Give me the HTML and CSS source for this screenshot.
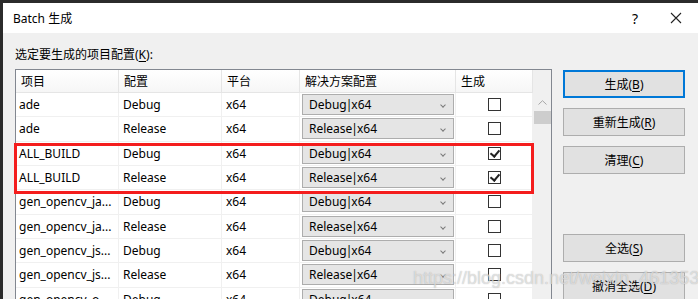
FILE: index.html
```html
<!DOCTYPE html>
<html lang="zh-CN">
<head>
    <meta charset="UTF-8">
    <title>Batch 生成</title>
    <link rel="stylesheet" href="styles.css">
</head>
<body>
    <div class="window">
        <div class="titlebar">
            <span class="title">Batch 生成</span>
            <span class="help">?</span>
            <svg class="close" width="12" height="12" viewBox="0 0 12 12">
                <path d="M1 1 L11 11 M11 1 L1 11" stroke="#222" stroke-width="1.1" fill="none"/>
            </svg>
        </div>

        <div class="content">
            <div class="caption">选定要生成的项目配置(<u>K</u>):</div>

            <div class="main">
                <div class="list">
                    <div class="grid">
                        <div class="th">项目</div>
                        <div class="th">配置</div>
                        <div class="th">平台</div>
                        <div class="th">解决方案配置</div>
                        <div class="th">生成</div>

                        <div class="td">ade</div>
                        <div class="td">Debug</div>
                        <div class="td">x64</div>
                        <div class="td"><div class="combo">Debug<b>|</b>x64<i></i></div></div>
                        <div class="td check-cell"><span class="check"></span></div>

                        <div class="td">ade</div>
                        <div class="td">Release</div>
                        <div class="td">x64</div>
                        <div class="td"><div class="combo">Release<b>|</b>x64<i></i></div></div>
                        <div class="td check-cell"><span class="check"></span></div>

                        <div class="td">ALL_BUILD</div>
                        <div class="td">Debug</div>
                        <div class="td">x64</div>
                        <div class="td"><div class="combo">Debug<b>|</b>x64<i></i></div></div>
                        <div class="td check-cell"><span class="check checked"></span></div>

                        <div class="td">ALL_BUILD</div>
                        <div class="td">Release</div>
                        <div class="td">x64</div>
                        <div class="td"><div class="combo">Release<b>|</b>x64<i></i></div></div>
                        <div class="td check-cell"><span class="check checked"></span></div>

                        <div class="td">gen_opencv_ja...</div>
                        <div class="td">Debug</div>
                        <div class="td">x64</div>
                        <div class="td"><div class="combo">Debug<b>|</b>x64<i></i></div></div>
                        <div class="td check-cell"><span class="check"></span></div>

                        <div class="td">gen_opencv_ja...</div>
                        <div class="td">Release</div>
                        <div class="td">x64</div>
                        <div class="td"><div class="combo">Release<b>|</b>x64<i></i></div></div>
                        <div class="td check-cell"><span class="check"></span></div>

                        <div class="td">gen_opencv_js...</div>
                        <div class="td">Debug</div>
                        <div class="td">x64</div>
                        <div class="td"><div class="combo">Debug<b>|</b>x64<i></i></div></div>
                        <div class="td check-cell"><span class="check"></span></div>

                        <div class="td">gen_opencv_js...</div>
                        <div class="td">Release</div>
                        <div class="td">x64</div>
                        <div class="td"><div class="combo">Release<b>|</b>x64<i></i></div></div>
                        <div class="td check-cell"><span class="check"></span></div>

                        <div class="td">gen_opencv_o...</div>
                        <div class="td">Debug</div>
                        <div class="td">x64</div>
                        <div class="td"><div class="combo">Debug<b>|</b>x64<i></i></div></div>
                        <div class="td check-cell"><span class="check"></span></div>
                    </div>

                    <div class="scrollbar">
                        <svg class="arrow-up" width="9" height="5" viewBox="0 0 9 5">
                            <path d="M0.5 4.5 L4.5 0.7 L8.5 4.5" stroke="#a6a6a6" stroke-width="1" fill="none"/>
                        </svg>
                        <div class="thumb"></div>
                    </div>

                    <div class="highlight"></div>
                </div>

                <div class="buttons">
                    <button class="btn default">生成(<u>B</u>)</button>
                    <button class="btn">重新生成(<u>R</u>)</button>
                    <button class="btn">清理(<u>C</u>)</button>
                    <button class="btn spaced">全选(<u>S</u>)</button>
                    <button class="btn">撤消全选(<u>D</u>)</button>
                </div>
            </div>
        </div>

        <div class="watermark">https://blog.csdn.net/weixin_46135347</div>
    </div>
</body>
</html>
```

FILE: styles.css
```css
* {
    box-sizing: border-box;
    margin: 0;
    padding: 0;
}

body {
    background: #2b2b2b;
    font-family: "Noto Sans", "Noto Sans CJK SC", sans-serif;
    font-size: 12px;
    color: #000;
    overflow: hidden;
    height: 299px;
}

u {
    text-decoration: underline;
    text-underline-offset: 2px;
}

.window {
    position: relative;
    margin: 3px 0 0 3px;
    height: 296px;
    background: #f0f0f0;
    overflow: hidden;
}

/* title bar */
.titlebar {
    display: flex;
    align-items: center;
    height: 30px;
    padding: 0 16px 0 10px;
    background: #fff;
}

.title {
    flex: 1;
    line-height: 16px;
    padding-top: 1px;
}

.help {
    font-size: 14px;
    margin-right: 32px;
    padding-top: 1px;
}

.close {
    display: block;
}

/* body */
.content {
    padding: 14px 0 0 12px;
}

.caption {
    line-height: 16px;
    height: 16px;
    margin-bottom: 6px;
}

.main {
    display: flex;
    align-items: flex-start;
}

.list {
    position: relative;
    display: flex;
    width: 537px;
    height: 260px;
    border: 1px solid #828790;
    background: #fff;
}

.grid {
    display: grid;
    grid-template-columns: 103px 103px 78px 156px 77px;
    grid-template-rows: 23px;
    grid-auto-rows: 24.33px;
    align-content: start;
}

.th {
    display: flex;
    align-items: center;
    padding: 0 5px;
    background: linear-gradient(#ffffff, #f6f6f6);
    border-right: 1px solid #e5e5e5;
    border-bottom: 1px solid #e5e5e5;
}

.td {
    display: flex;
    align-items: center;
    padding: 0 3px;
    border-right: 1px solid #f0f0f0;
    border-bottom: 1px solid #f0f0f0;
    white-space: nowrap;
    overflow: hidden;
}

.td:nth-child(5n+2),
.td:nth-child(5n+3) {
    padding-left: 4px;
}

.td:has(.combo) {
    padding: 0 1px 0 2px;
}

.combo {
    position: relative;
    display: flex;
    align-items: center;
    width: 100%;
    height: 21px;
    padding-left: 6px;
    border: 1px solid #adadad;
    background: #e5e5e5;
}

.combo b {
    font-weight: normal;
    margin: 0 -1px 0 -1px;
}

.combo i {
    position: absolute;
    right: 8px;
    top: 8px;
    width: 4px;
    height: 4px;
    border-right: 1px solid #7a7a7a;
    border-bottom: 1px solid #7a7a7a;
    transform: rotate(45deg);
}

.check-cell {
    justify-content: center;
    padding: 0 0 0 1px;
}

.check {
    position: relative;
    width: 13px;
    height: 13px;
    border: 1px solid #333;
    background: #fff;
}

.check.checked::after {
    content: "";
    position: absolute;
    left: 3px;
    top: 0px;
    width: 4px;
    height: 7px;
    border-right: 2px solid #222;
    border-bottom: 2px solid #222;
    transform: rotate(40deg);
}

.scrollbar {
    width: 18px;
    background: #f0f0f0;
    display: flex;
    flex-direction: column;
    align-items: center;
    padding-top: 30px;
}

.arrow-up {
    display: block;
}

.thumb {
    margin-top: 6px;
    width: 17px;
    height: 13px;
    background: #cdcdcd;
}

/* red annotation frame */
.highlight {
    position: absolute;
    left: -2px;
    top: 73px;
    width: 520px;
    height: 51px;
    border: 3px solid #f41d1d;
}

/* buttons */
.buttons {
    display: flex;
    flex-direction: column;
    gap: 10px;
    width: 122px;
    margin: 1px 0 0 11px;
}

.btn {
    height: 28px;
    font: inherit;
    color: #000;
    background: #e1e1e1;
    border: 1px solid #adadad;
}

.btn.default {
    border: 2px solid #0078d7;
}

.btn.spaced {
    margin-top: 50px;
}

.watermark {
    position: absolute;
    left: 410px;
    top: 265px;
    font-family: "Liberation Sans", sans-serif;
    font-size: 18px;
    color: rgba(255, 255, 255, 0.55);
    text-shadow: 0 0 1px rgba(120, 120, 120, 0.6);
    white-space: nowrap;
}
```
